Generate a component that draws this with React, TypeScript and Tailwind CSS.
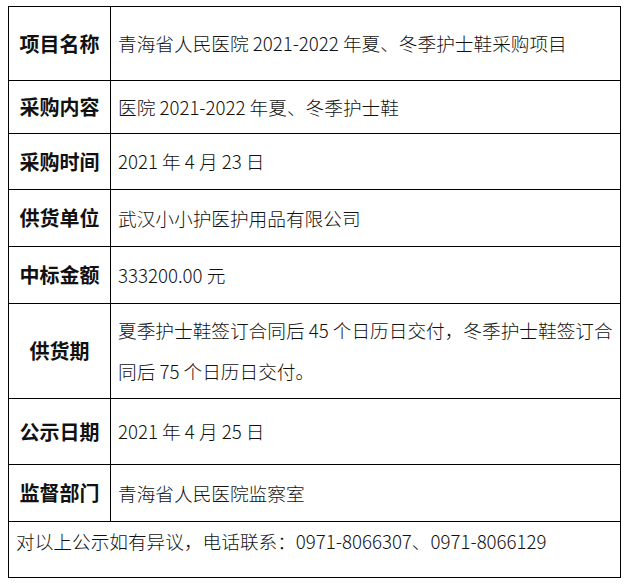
const rows: { label: string; value: string; h: string }[] = [
  { label: "项目名称", value: "青海省人民医院 2021-2022 年夏、冬季护士鞋采购项目", h: "h-[74px]" },
  { label: "采购内容", value: "医院 2021-2022 年夏、冬季护士鞋", h: "h-[53px]" },
  { label: "采购时间", value: "2021 年 4 月 23 日", h: "h-[56px]" },
  { label: "供货单位", value: "武汉小小护医护用品有限公司", h: "h-[57px]" },
  { label: "中标金额", value: "333200.00 元", h: "h-[57px]" },
  {
    label: "供货期",
    value: "夏季护士鞋签订合同后 45 个日历日交付，冬季护士鞋签订合同后 75 个日历日交付。",
    h: "h-[95px]",
  },
  { label: "公示日期", value: "2021 年 4 月 25 日", h: "h-[66px]" },
  { label: "监督部门", value: "青海省人民医院监察室", h: "h-[57px]" },
];

export default function App() {
  return (
    <div
      className="h-[586px] w-[628px] bg-white pl-[8px] pt-[6px] text-[#111]"
      style={{ fontFamily: '"Noto Sans CJK SC", "Noto Sans", sans-serif' }}
    >
      <div className="w-[613px] border border-black">
        {rows.map((r) => (
          <div key={r.label} className={`flex border-b border-black ${r.h}`}>
            <div className="flex w-[101px] shrink-0 items-center justify-center text-[20px] font-bold">
              {r.label}
            </div>
            <div className="flex flex-1 items-center border-l border-black pb-[2px] pl-[7px] text-[18.67px] font-light leading-[41px]">
              <span>{r.value}</span>
            </div>
          </div>
        ))}
        <div className="h-[55px] pl-[7px] text-[18.67px] font-light leading-[38px]">
          对以上公示如有异议，电话联系：0971-8066307、0971-8066129
        </div>
      </div>
    </div>
  );
}
